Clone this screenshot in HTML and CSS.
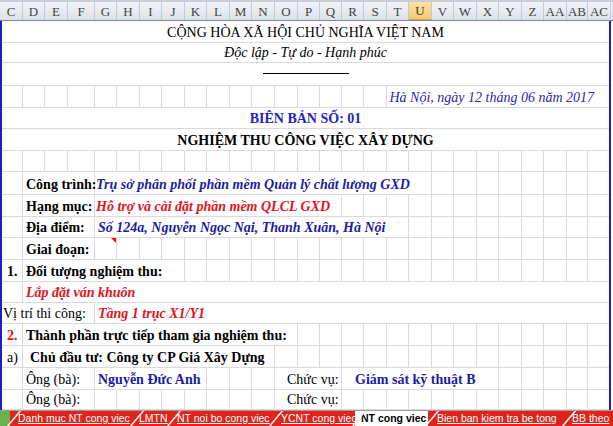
FILE: index.html
```html
<!DOCTYPE html>
<html lang="vi">
<head>
<meta charset="utf-8">
<title>NT cong viec</title>
<link rel="stylesheet" href="styles.css">
</head>
<body>
<div class="sheet">
  <div class="colhdr">
    <div class="h">C</div><div class="h">D</div><div class="h">E</div><div class="h">F</div><div class="h">G</div><div class="h">H</div><div class="h">I</div><div class="h">J</div><div class="h">K</div><div class="h">L</div><div class="h">M</div><div class="h">N</div><div class="h">O</div><div class="h">P</div><div class="h">Q</div><div class="h">R</div><div class="h">S</div><div class="h">T</div><div class="h sel">U</div><div class="h">V</div><div class="h">W</div><div class="h">X</div><div class="h">Y</div><div class="h">Z</div><div class="h">AA</div><div class="h">AB</div><div class="h">AC</div>
  </div>

  <div class="grid">
    <div class="row r22"><div class="c s27 center">CỘNG HÒA XÃ HỘI CHỦ NGHĨA VIỆT NAM</div></div>
    <div class="row r20"><div class="c s27 center it">Độc lập - Tự do - Hạnh phúc</div></div>
    <div class="row r23"><div class="c s27 rule"><span class="line"></span></div></div>
    <div class="row r22">
      <div class="c"></div><div class="c"></div><div class="c"></div><div class="c"></div><div class="c"></div><div class="c"></div><div class="c"></div><div class="c"></div><div class="c"></div><div class="c"></div><div class="c"></div><div class="c"></div><div class="c"></div><div class="c"></div><div class="c"></div><div class="c"></div><div class="c"></div>
      <div class="c s10 right it blue date">Hà Nội, ngày 12 tháng 06 năm 2017</div>
    </div>
    <div class="row r21"><div class="c s27 center b title">BIÊN BẢN SỐ: 01</div></div>
    <div class="row r22"><div class="c s27 center b">NGHIỆM THU CÔNG VIỆC XÂY DỰNG</div></div>
    <div class="row r21">
      <div class="c"></div><div class="c"></div><div class="c"></div><div class="c"></div><div class="c"></div><div class="c"></div><div class="c"></div><div class="c"></div><div class="c"></div><div class="c"></div><div class="c"></div><div class="c"></div><div class="c"></div><div class="c"></div><div class="c"></div><div class="c"></div><div class="c"></div><div class="c"></div><div class="c"></div><div class="c"></div><div class="c"></div><div class="c"></div><div class="c"></div><div class="c"></div><div class="c"></div><div class="c"></div><div class="c"></div>
    </div>
    <div class="row r23">
      <div class="c"></div>
      <div class="c s3 b pl3">Công trình:</div>
      <div class="c s15 b it blue pl1">Trụ sở phân phối phần mềm Quản lý chất lượng GXD</div>
      <div class="c"></div><div class="c"></div><div class="c"></div><div class="c"></div><div class="c"></div><div class="c"></div><div class="c"></div><div class="c"></div>
    </div>
    <div class="row r22">
      <div class="c"></div>
      <div class="c s3 b pl3">Hạng mục:</div>
      <div class="c s11 b it red pl1">Hỗ trợ và cài đặt phần mềm QLCL GXD</div>
      <div class="c"></div><div class="c"></div><div class="c"></div><div class="c"></div><div class="c"></div><div class="c"></div><div class="c"></div><div class="c"></div><div class="c"></div><div class="c"></div><div class="c"></div><div class="c"></div>
    </div>
    <div class="row r21">
      <div class="c"></div>
      <div class="c s3 b pl3">Địa điểm:</div>
      <div class="c s14 b it blue pl3">Số 124a, Nguyễn Ngọc Nại, Thanh Xuân, Hà Nội</div>
      <div class="c"></div><div class="c"></div><div class="c"></div><div class="c"></div><div class="c"></div><div class="c"></div><div class="c"></div><div class="c"></div><div class="c"></div>
    </div>
    <div class="row r22">
      <div class="c"></div>
      <div class="c s3 b pl3">Giai đoạn:</div>
      <div class="c note"></div><div class="c"></div><div class="c"></div><div class="c"></div><div class="c"></div><div class="c"></div><div class="c"></div><div class="c"></div><div class="c"></div><div class="c"></div><div class="c"></div><div class="c"></div><div class="c"></div><div class="c"></div><div class="c"></div><div class="c"></div><div class="c"></div><div class="c"></div><div class="c"></div><div class="c"></div><div class="c"></div><div class="c"></div><div class="c"></div>
    </div>
    <div class="row r22">
      <div class="c b pl7">1.</div>
      <div class="c s7 b pl3">Đối tượng nghiệm thu:</div>
      <div class="c"></div><div class="c"></div><div class="c"></div><div class="c"></div><div class="c"></div><div class="c"></div><div class="c"></div><div class="c"></div><div class="c"></div><div class="c"></div><div class="c"></div><div class="c"></div><div class="c"></div><div class="c"></div><div class="c"></div><div class="c"></div><div class="c"></div><div class="c"></div><div class="c"></div>
    </div>
    <div class="row r21">
      <div class="c"></div>
      <div class="c s26 b it red pl3">Lắp đặt ván khuôn</div>
    </div>
    <div class="row r21">
      <div class="c s4 pl3">Vị trí thi công:</div>
      <div class="c s23 b it red pl3">Tầng 1 trục X1/Y1</div>
    </div>
    <div class="row r22">
      <div class="c b red pl7">2.</div>
      <div class="c s12 b pl3">Thành phần trực tiếp tham gia nghiệm thu:</div>
      <div class="c"></div><div class="c"></div><div class="c"></div><div class="c"></div><div class="c"></div><div class="c"></div><div class="c"></div><div class="c"></div><div class="c"></div><div class="c"></div><div class="c"></div><div class="c"></div><div class="c"></div><div class="c"></div>
    </div>
    <div class="row r22">
      <div class="c pl7">a)</div>
      <div class="c s11 b pl7">Chủ đầu tư: Công ty CP Giá Xây Dựng</div>
      <div class="c"></div><div class="c"></div><div class="c"></div><div class="c"></div><div class="c"></div><div class="c"></div><div class="c"></div><div class="c"></div><div class="c"></div><div class="c"></div><div class="c"></div><div class="c"></div><div class="c"></div><div class="c"></div><div class="c"></div>
    </div>
    <div class="row r22">
      <div class="c"></div>
      <div class="c s3 pl3">Ông (bà):</div>
      <div class="c s5 b blue pl3">Nguyễn Đức Anh</div>
      <div class="c"></div><div class="c"></div><div class="c"></div>
      <div class="c s3 pl12">Chức vụ:</div>
      <div class="c s7 b blue pl13">Giám sát kỹ thuật B</div>
      <div class="c"></div><div class="c"></div><div class="c"></div><div class="c"></div><div class="c"></div>
    </div>
    <div class="row r20">
      <div class="c"></div>
      <div class="c s3 pl3">Ông (bà):</div>
      <div class="c"></div><div class="c"></div><div class="c"></div><div class="c"></div><div class="c"></div><div class="c"></div><div class="c"></div><div class="c"></div>
      <div class="c s3 pl12">Chức vụ:</div>
      <div class="c"></div><div class="c"></div><div class="c"></div><div class="c"></div><div class="c"></div><div class="c"></div><div class="c"></div><div class="c"></div><div class="c"></div><div class="c"></div><div class="c"></div><div class="c"></div>
    </div>
  </div>

  <div class="tabs">
    <div class="tab t0"></div>
    <div class="tab t1">Danh muc NT cong viec</div>
    <div class="tab t2">LMTN</div>
    <div class="tab t3">NT noi bo cong viec</div>
    <div class="tab t4">YCNT cong viec</div>
    <div class="tab t5 active">NT cong viec</div>
    <div class="tab t6">Bien ban kiem tra be tong</div>
    <div class="tab t7">BB theo</div>
  </div>
</div>
</body>
</html>
```

FILE: styles.css
```css
* { box-sizing: border-box; }
html, body { margin: 0; padding: 0; background: #ffffff; }
body { width: 613px; height: 426px; overflow: hidden; }

.sheet {
  --cols: 23px 22px 23px 27px 22px 23px 22px 23px 22px 23px 22px 23px 23px 22px 22px 22px 23px 22px 23px 22px 23px 22px 23px 22px 23px 21px 23px;
  width: 613px;
  font-family: "Liberation Serif", "Times New Roman", serif;
  font-size: 14px;
  color: #000;
}

/* column header */
.colhdr {
  display: grid;
  grid-template-columns: var(--cols) 2px;
  height: 21px;
  background: linear-gradient(#f1f3f6, #dde2e9);
  border-top: 2px solid #c9ced6;
  border-bottom: 1px solid #7d7fc9;
}
.colhdr::after { content: ""; }
.h {
  border-right: 1px solid #c4cad3;
  display: flex;
  align-items: center;
  justify-content: center;
  font-size: 13px;
  color: #444;
  line-height: 1;
}
.h.sel { background: linear-gradient(#fbe2a6, #f5c970); border-bottom: 1px solid #e3a53a; color: #333; }

/* grid */
.grid {
  position: relative;
  width: 611px;
}
.grid::before, .grid::after {
  content: "";
  position: absolute;
  top: 0;
  bottom: 0;
  width: 2px;
  background: #1d1dcc;
}
.grid::before { left: 0; }
.grid::after { right: 0; }

.row {
  display: grid;
  grid-template-columns: var(--cols);
  border-bottom: 1px solid #dadada;
}
.r20 { height: 20px; }
.r21 { height: 21px; }
.r22 { height: 22px; }
.r23 { height: 23px; }

.c {
  border-right: 1px solid #dadada;
  display: flex;
  align-items: flex-end;
  padding-bottom: 1px;
  white-space: nowrap;
  overflow: visible;
  line-height: 16px;
  position: relative;
}
.s3 { grid-column: span 3; }
.s4 { grid-column: span 4; }
.s5 { grid-column: span 5; }
.s7 { grid-column: span 7; }
.s10 { grid-column: span 10; }
.s11 { grid-column: span 11; }
.s12 { grid-column: span 12; }
.s14 { grid-column: span 14; }
.s15 { grid-column: span 15; }
.s23 { grid-column: span 23; }
.s26 { grid-column: span 26; }
.s27 { grid-column: span 27; border-right: none; }

.center { justify-content: center; }
.right { justify-content: flex-end; }
.b { font-weight: bold; }
.it { font-style: italic; }
.blue { color: #1c1ca3; }
.title { color: #2424c2; }
.date { color: #2a2aa8; padding-right: 16px; }
.red { color: #e4121c; }
.pl1 { padding-left: 1px; }
.pl3 { padding-left: 3px; }
.pl7 { padding-left: 7px; }
.pl12 { padding-left: 12px; }
.pl13 { padding-left: 13px; }

.rule { justify-content: center; align-items: flex-start; padding: 10px 0 0 0; }
.line { display: block; width: 86px; height: 1px; background: #000; }

.note::after {
  content: "";
  position: absolute;
  top: 0;
  right: 0;
  width: 0;
  height: 0;
  border-top: 5px solid #e4121c;
  border-left: 5px solid transparent;
}

/* sheet tabs */
.tabs {
  display: flex;
  height: 16px;
  background: #c9cdd3;
  border-top: 1px solid #9aa0a8;
  font-family: "Liberation Sans", Arial, sans-serif;
  font-size: 10.5px;
  overflow: hidden;
}
.tab {
  position: relative;
  height: 15px;
  background: #e2231b;
  color: #ffffff;
  line-height: 14px;
  white-space: nowrap;
  text-decoration: underline;
  flex: none;
}
.tab::before {
  content: "";
  position: absolute;
  left: 3px;
  top: 0;
  bottom: 0;
  width: 2px;
  background: #f4f4f4;
  transform: skewX(-40deg);
}
.t0 { width: 10px; background: #6ab04c; }
.t0::before { display: none; }
.t1 { width: 123px; padding-left: 8px; }
.t2 { width: 37px; padding-left: 6px; }
.t3 { width: 102px; padding-left: 7px; }
.t4 { width: 83px; padding-left: 9px; }
.t5 { width: 73px; padding-left: 6px; }
.t6 { width: 137px; padding-left: 9px; }
.t7 { width: 48px; padding-left: 7px; }
.tab.active {
  background: #ffffff;
  color: #000;
  font-weight: bold;
  text-decoration: none;
}
```
